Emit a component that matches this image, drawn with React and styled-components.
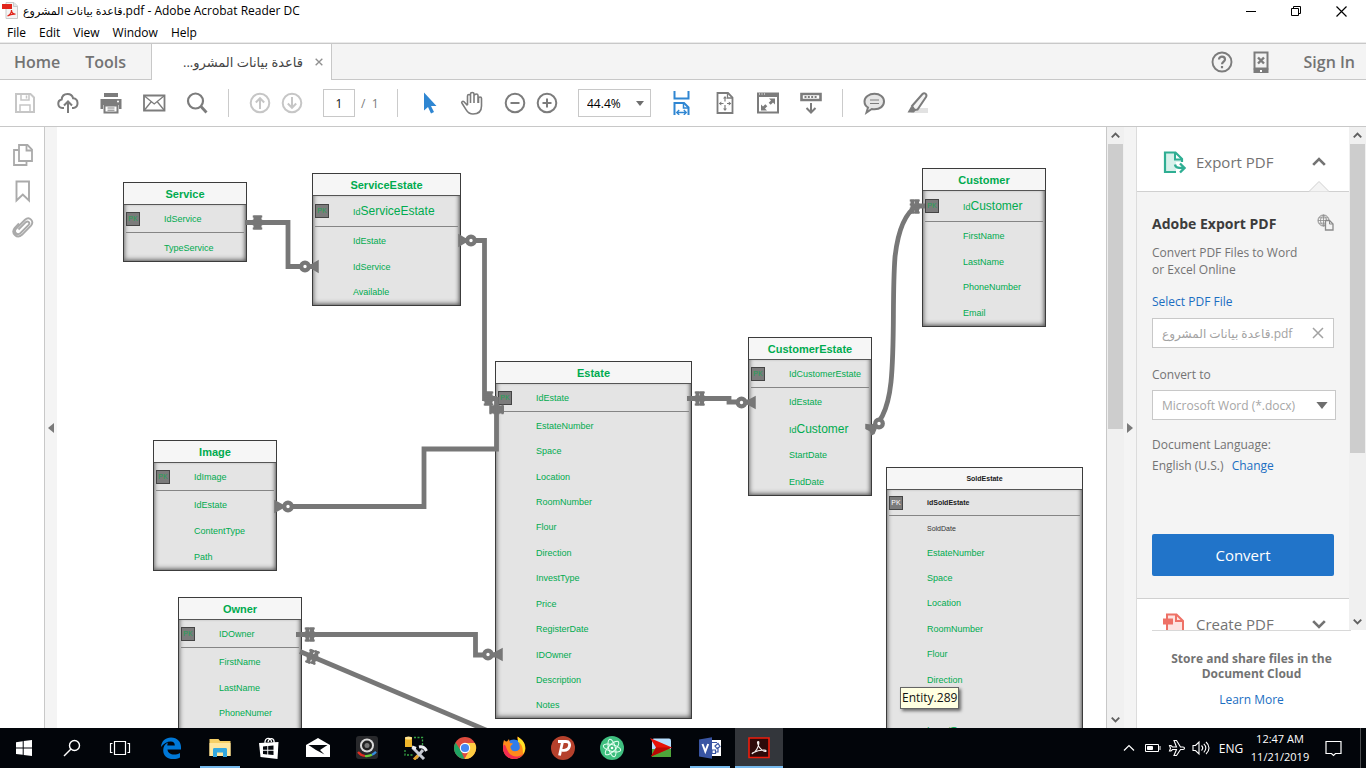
import React from "react";
import styled, { createGlobalStyle, css } from "styled-components";

const UI = `"Open Sans", "Noto Sans", "DejaVu Sans", sans-serif`;

const GlobalStyle = createGlobalStyle`
  *, *::before, *::after { box-sizing: border-box; }
  html, body { margin: 0; padding: 0; }
  body { font-family: ${UI}; font-size: 12px; color: #000; background: #fff; overflow: hidden; }
  button, input, select { font: inherit; color: inherit; margin: 0; }
  button { border: 0; padding: 0; background: none; }
  a { color: #1b6ec2; text-decoration: none; }
  h1, h2, h3, p, ul { margin: 0; padding: 0; font-weight: inherit; }
  ul { list-style: none; }
  svg { display: block; flex: none; }
`;

const Screen = styled.div`
  display: flex;
  flex-direction: column;
  height: 100vh;
`;

/* ---------- window chrome ---------- */

const TitleBar = styled.header`
  display: flex;
  align-items: center;
  height: 22px;
  padding: 0 2px 0 1px;
`;

const WindowTitle = styled.h1`
  flex: 1;
  margin-left: 4px;
  font-size: 12px;
  line-height: 22px;
`;

const FileName = styled.span`
  font-size: 11px;
`;

const WindowButton = styled.button`
  display: flex;
  align-items: center;
  justify-content: center;
  width: 45px;
  height: 22px;
`;

const MenuBar = styled.nav`
  display: flex;
  gap: 13px;
  height: 20px;
  padding: 0 7px;
  line-height: 22px;
`;

const TabBar = styled.div`
  display: flex;
  height: 38px;
  background: #f4f4f4;
  border-top: 1px solid #eaeaea;
  box-shadow: inset 0 1px #c8c8c8, inset 0 -1px #c8c8c8;
`;

const MainTabs = styled.div`
  display: flex;
  align-items: center;
  gap: 25px;
  width: 151px;
  padding-left: 14px;
`;

const BarText = styled.button`
  font-size: 16px;
  font-weight: 600;
  line-height: 20px;
  color: #737373;
`;

const DocumentTab = styled.div`
  display: flex;
  align-items: center;
  justify-content: flex-end;
  gap: 12px;
  width: 181px;
  padding-right: 8px;
  margin-top: 1px;
  background: #fff;
  border: solid #c8c8c8;
  border-width: 0 1px;
  font-size: 13px;
  color: #444;
`;

const TabActions = styled.div`
  display: flex;
  align-items: center;
  margin-left: auto;
  gap: 15px;
  padding-right: 11px;

  ${BarText} { margin-left: 16px; }
`;

/* ---------- toolbar ---------- */

const ToolBar = styled.div`
  display: flex;
  align-items: center;
  gap: 19px;
  height: 47px;
  padding-left: 13px;
  border-bottom: 1px solid #c8c8c8;
`;

const Pair = styled.div`
  display: flex;
  gap: 8px;
`;

const ToolButton = styled.button`
  width: 24px;
  height: 24px;
  color: ${(p) => (p.$tone === "blue" ? "#2f86d2" : p.$tone === "off" ? "#c6c6c6" : "#7c7c7c")};
`;

const Divider = styled.span`
  width: 1px;
  height: 28px;
  background: #cbcbcb;
`;

const PageField = styled.label`
  display: flex;
  align-items: center;
  width: 55px;
  gap: 6px;
  color: #7c7c7c;
  white-space: nowrap;

  input {
    width: 32px;
    height: 28px;
    padding: 0;
    border: 1px solid #c8c8c8;
    text-align: center;
    color: #111;
  }
`;

const SelectBox = styled.div`
  display: flex;
  align-items: center;
  width: ${(p) => p.$width}px;
  height: ${(p) => p.$height}px;
  background: #fff;
  border: 1px solid #c8c8c8;

  select {
    flex: 1;
    min-width: 0;
    height: 100%;
    border: 0;
    padding: 0 0 0 ${(p) => p.$pad}px;
    background: transparent;
    appearance: none;
  }
  svg { margin-right: ${(p) => p.$pad - 2}px; color: #6e6e6e; }
`;

/* ---------- work area ---------- */

const Work = styled.main`
  display: flex;
  flex: 1;
  min-height: 0;
`;

const Rail = styled.nav`
  display: flex;
  flex-direction: column;
  align-items: center;
  gap: 12px;
  width: 45px;
  padding: 16px 0 0 2px;
  border-right: 1px solid #c8c8c8;
`;

const RailButton = styled.button`
  width: 24px;
  height: 24px;
  color: #aaa;
`;

const CloseButton = styled.button`
  color: #909090;
`;

const Strip = styled.button`
  display: flex;
  align-items: center;
  justify-content: center;
  width: 12px;
  background: #f4f4f4;
  color: #7a7a7a;
`;

const Canvas = styled.div`
  position: relative;
  flex: 1;
  min-width: 0;
  overflow: hidden;
  border-right: 1px solid #c8c8c8;
`;

const ScrollTrack = styled.div`
  display: flex;
  flex-direction: column;
  width: ${(p) => p.$width}px;
  padding: 0 1px;
  background: #f0f0f0;
`;

const ScrollArrow = styled.button`
  display: flex;
  align-items: center;
  justify-content: center;
  height: 17px;
  color: #606060;
`;

const ScrollThumb = styled.div`
  flex: ${(p) => p.$share};
  background: #cdcdcd;
`;

const ScrollRest = styled.div`
  flex: ${(p) => p.$share};
`;

/* ---------- diagram ---------- */

const EntityBox = styled.section`
  position: absolute;
  left: ${(p) => p.$x}px;
  top: ${(p) => p.$y}px;
  width: ${(p) => p.$w}px;
  height: ${(p) => p.$h}px;
  display: flex;
  flex-direction: column;
  border: 1px solid #3c3c3c;
  background: #e4e4e4;
  font-family: "Liberation Sans", Arial, sans-serif;
  font-size: 9px;
  color: ${(p) => (p.$plain ? "#1a1a1a" : "#00ab4f")};
`;

const EntityTitle = styled.h2`
  height: 22px;
  line-height: 22px;
  background: #f6f6f6;
  border-bottom: 1px solid #555;
  text-align: center;
  font-size: ${(p) => (p.$plain ? 7 : 11)}px;
  font-weight: 700;
`;

const EntityBody = styled.div`
  display: flex;
  flex-direction: column;
  flex: 1;
  min-height: 0;
  box-shadow: inset 4px 0 4px -3px #777, inset -4px 0 4px -3px #555, inset 0 -5px 5px -4px #555;
`;

const KeyRow = styled.div`
  display: flex;
  align-items: center;
  height: ${(p) => p.$h}px;
  margin: 0 2px;
  border-bottom: 1px solid #858585;
  font-weight: ${(p) => (p.$plain ? 700 : 400)};
  font-size: ${(p) => (p.$plain ? 7 : 9)}px;
`;

const KeyBadge = styled.span`
  width: 14px;
  height: 14px;
  margin-right: 24px;
  border: 1px solid #444;
  background: #7b7b7b;
  font-size: 7px;
  line-height: 12px;
  font-weight: 400;
  text-align: center;
  color: ${(p) => (p.$plain ? "#fff" : "#22a355")};
`;

const Big = styled.span`
  font-size: 12px;
`;

const Fields = styled.ul`
  display: flex;
  flex-direction: column;
  flex: 1;
  padding: 1px 0 0 40px;
`;

const Field = styled.li`
  display: flex;
  align-items: center;
  ${(p) =>
    p.$plain
      ? css`height: 23px; font-size: 7px; color: #333;`
      : css`flex: 1; color: #00ab4f;`}
`;

const Links = styled.svg`
  position: absolute;
  left: 0;
  top: 0;
`;

const Tip = styled.div`
  position: absolute;
  left: 843px;
  top: 560px;
  padding: 0 1px;
  border: 1px solid #646464;
  background: #ffffe1;
  box-shadow: 2px 2px 3px #0008;
  color: #111;
  line-height: 20px;
`;

/* ---------- right panel ---------- */

const Panel = styled.aside`
  display: flex;
  flex-direction: column;
  width: 230px;
  border-left: 1px solid #dcdcdc;
  color: #737373;
`;

const PanelScroll = styled.div`
  display: flex;
  flex: 1;
  min-height: 0;
`;

const PanelContent = styled.div`
  flex: 1;
  overflow: hidden;
`;

const ToolHeader = styled.button`
  display: flex;
  align-items: center;
  width: 100%;
  height: ${(p) => p.$height}px;
  padding: ${(p) => p.$top || 0}px 23px 0 25px;
  gap: 10px;
  font-size: 15px;
  text-align: left;

  span { flex: 1; }
`;

const ToolBody = styled.div`
  position: relative;
  display: flex;
  flex-direction: column;
  align-items: flex-start;
  padding: 22px 15px;
  background: #f4f4f4;
  border: solid #d0d0d0;
  border-width: 1px 0;
  font-size: 12px;
`;

const Notch = styled.svg`
  position: absolute;
  right: 20px;
  top: -11px;
`;

const ToolTitle = styled.h2`
  display: flex;
  justify-content: space-between;
  width: 182px;
  line-height: 20px;
  font-size: 14px;
  font-weight: 700;
  color: #3c3c3c;
`;

const Description = styled.p`
  margin-top: 10px;
  line-height: 17px;
`;

const PickLink = styled.a`
  margin-top: 15px;
  line-height: 18px;
`;

const FileField = styled.div`
  display: flex;
  align-items: center;
  width: 182px;
  height: 30px;
  margin-top: 7px;
  padding: 0 9px;
  border: 1px solid #c8c8c8;
  background: #fff;
  color: #a2a2a2;

  input {
    flex: 1;
    min-width: 0;
    padding: 0;
    border: 0;
  }
`;

const FieldLabel = styled.label`
  margin: 18px 0 6px;
  line-height: 18px;
`;

const FormatSelect = styled(SelectBox)`
  color: #a6a6a6;
`;

const Language = styled.p`
  margin-top: 14px;
  line-height: 21px;

  a { margin-left: 5px; }
`;

const ConvertButton = styled.button`
  width: 182px;
  height: 42px;
  margin-top: 58px;
  border-radius: 2px;
  background: #2174c9;
  color: #fff;
  font-size: 15px;
`;

const PanelFooter = styled.footer`
  height: 98px;
  margin-left: 15px;
  margin-right: 15px;
  padding: 20px 0 0;
  border-top: 1px solid #d8d8d8;
  text-align: center;
  line-height: 15px;

  p { font-weight: 700; margin-bottom: 11px; }
`;

/* ---------- taskbar ---------- */

const TaskBar = styled.footer`
  display: flex;
  height: 40px;
  background: #02050a;
  color: #fff;
`;

const TaskGroup = styled.div`
  display: flex;
  gap: ${(p) => (p.$apps ? 1 : 0)}px;
  margin-left: ${(p) => (p.$apps ? 3 : 0)}px;
`;

const TaskButton = styled.button`
  position: relative;
  display: flex;
  align-items: center;
  justify-content: center;
  width: ${(p) => p.$width || 48}px;
  height: 40px;
  background: ${(p) => (p.$state === "active" ? "#33363b" : "none")};
  box-shadow: ${(p) => (p.$state === "active" ? "inset 0 -2px #76b9ed" : "none")};

  &::after {
    content: "";
    display: ${(p) => (p.$state === "open" ? "block" : "none")};
    position: absolute;
    left: 4px;
    right: 4px;
    bottom: 0;
    height: 2px;
    background: #76b9ed;
  }
`;

const Tray = styled.div`
  display: flex;
  align-items: center;
  margin-left: auto;
  padding-right: 5px;
`;

const Clock = styled.time`
  width: 62px;
  text-align: center;
  line-height: 18px;
  font-size: 11px;
`;

const PeekEdge = styled.span`
  width: 1px;
  height: 40px;
  margin-left: 4px;
  background: #4b4d50;
`;

/* ---------- icons ---------- */

const Glyph = ({ size = 24, w = 2, children, ...rest }) => (
  <svg width={size} height={size} viewBox="0 0 24 24" fill="none" stroke="currentColor" strokeWidth={w} aria-hidden="true" {...rest}>
    {children}
  </svg>
);

const Save = () => (
  <Glyph w="2"><path d="M3 3h14.500L21 6.500V21H3z" /><path d="M8 3v6h8V3M13.500 4.500v3M7 21v-7h10v7" strokeWidth="1.500" /></Glyph>
);
const Cloud = () => (
  <Glyph><path d="M8 17H6.300a4.300 4.300 0 0 1-.6-8.500C6 5 8.500 3 11.500 3c3 0 5 1.800 5.600 4.300A4.900 4.900 0 0 1 17.500 17H16" /><path d="M12 22V11M8 14.500l4-4 4 4" /></Glyph>
);
const Print = () => (
  <Glyph><path d="M5 2h14v4H5zM1.500 8h21v10H20v-4H4v4H1.500z" fill="currentColor" stroke="none" /><path d="M5.500 14.500h13v7h-13z" /><path d="M8.500 17h7M8.500 19.200h7" strokeWidth="1" /><circle cx="19" cy="10.500" r="1" fill="#fff" stroke="none" /></Glyph>
);
const Mail = () => (
  <Glyph w="1.800"><path d="M2 4.500h20.500v15H2z" /><path d="M2.500 5l9.700 8L22 5M2.500 19l6.500-8M22 19l-6.500-8" strokeWidth="1.300" /></Glyph>
);
const Search = () => (
  <Glyph w="2.200"><circle cx="10.500" cy="10" r="7.500" /><path d="M16 15.500l5.500 6" strokeWidth="2.800" /></Glyph>
);
const Up = () => (
  <Glyph><circle cx="12" cy="12" r="9.300" /><path d="M12 18V7.500M7.800 11.500L12 7.200l4.200 4.300" /></Glyph>
);
const Down = () => (
  <Glyph><circle cx="12" cy="12" r="9.300" /><path d="M12 6v10.500M7.800 12.500l4.200 4.300 4.200-4.300" /></Glyph>
);
const Pointer = () => (
  <Glyph><path d="M7 1.500v18l4-3.500 3 6.500 3-1.500-3-6h5.500z" fill="currentColor" stroke="none" /></Glyph>
);
const Hand = () => (
  <Glyph w="1.600"><path d="M7.500 14.500L4 10.800c-1.200-1.200-3 0-2 1.500l4.200 6.500C7.800 21.500 9.800 23 13 23c5.500 0 8.500-3 8.500-8V7.500c0-2-3-2-3 0V12M7.500 14V5c0-2 3-2 3 0v7M10.500 6V3c0-2 3.500-2 3.500 0v9M14.500 4.500c0-2 3.500-2 3.500 0V12" /></Glyph>
);
const Minus = () => (
  <Glyph><circle cx="12" cy="12" r="9.300" /><path d="M7.500 12h9" /></Glyph>
);
const Plus = () => (
  <Glyph><circle cx="12" cy="12" r="9.300" /><path d="M7.500 12h9M12 7.500v9" /></Glyph>
);
const FitWidth = () => (
  <Glyph><path d="M4.500 0v7.500h14V0M4.500 24V12H14l4.500 4.500V24" /><path d="M13.500 12v5h5" strokeWidth="1.500" /><path d="M7 21.500h9M9.200 19l-2.500 2.500L9.200 24M13.800 19l2.500 2.500-2.500 2.500" strokeWidth="1.300" /></Glyph>
);
const FitPage = () => (
  <Glyph w="1.800"><path d="M4.500 2H15l4.500 4.500V22h-15z" /><path d="M14.500 2.500V7h5" strokeWidth="1.300" /><path d="M12 6.500v4M12 14v4.500M6.500 12.500h4M14 12.500h4" strokeWidth="1.200" /><path d="M12 5l2 2.500h-4zM12 20l2-2.500h-4zM5.800 12.500l2.500-2v4zM18.300 12.500l-2.500-2v4z" fill="currentColor" stroke="none" /></Glyph>
);
const FullScreen = () => (
  <Glyph><path d="M2 4h20v17.500H2z" /><path d="M1 1.500h22V6H1z" fill="currentColor" stroke="none" /><path d="M3 3h1M5.500 3h1M8 3h1" stroke="#fff" strokeWidth="1" /><path d="M13 7.500h6v6l-2-2-2.300 2.300-2-2L15 9.500zM5 19.500v-6l2 2 2.300-2.300 2 2L9 17.500l2 2z" fill="currentColor" stroke="none" /></Glyph>
);
const ReadMode = () => (
  <Glyph><path d="M2.500 3h19v6h-19z" strokeWidth="2.600" /><path d="M5.500 6h2M8.800 6h2M12.200 6h2M15.600 6h2" strokeWidth="1.800" /><path d="M12 12v9M7.500 17l4.500 4.500 4.500-4.500" /></Glyph>
);
const Comment = () => (
  <Glyph><path d="M12.500 2.800c5.500 0 9.500 3.200 9.500 7.700 0 4.600-4 7.800-9.500 7.800-1 0-2 0-2.800-.3L4.500 21.500l1.500-5C3.500 15 2.500 13 2.500 10.500c0-4.500 4.500-7.700 10-7.700z" fill="#e6e6e6" /><path d="M8 9h9M8 12.500h9" strokeWidth="1.200" /></Glyph>
);
const Marker = () => (
  <Glyph><path d="M9 17h14v5H6z" fill="#e2e2e2" stroke="none" /><path d="M7 15L17.500 3c2-1.800 5 .3 3.500 3L12.500 18.500 9.500 19z" fill="#f3f3f3" /><path d="M6 15.500l5 3.500-2 2.500H2.500z" fill="currentColor" stroke="none" /></Glyph>
);
const Help = () => (
  <Glyph w="1.900"><circle cx="12" cy="12" r="9.500" /><path d="M9 9.500C9 5.500 15 6 15 9.500c0 2-3 2.200-3 4.700M12 16v2.200" strokeWidth="2.200" /></Glyph>
);
const Phone = () => (
  <Glyph><path d="M5.500 2.500h13v16h-13z" strokeWidth="2" /><path d="M4.500 18.500h15v4.500h-15z" fill="currentColor" stroke="none" /><path d="M9 7.500l6 6M15 7.500l-6 6" strokeWidth="2.400" /><path d="M11 21h2" stroke="#fff" /></Glyph>
);
const Pages = () => (
  <Glyph w="1.800"><path d="M8 2h8.500L21 6.500V18H8z" /><path d="M15.500 2.500v5H21" /><path d="M7.500 7H3v15h12.500v-3.500" /></Glyph>
);
const Bookmark = () => (
  <Glyph w="1.900"><path d="M5.500 2.500h12.500v19L11.800 15.500l-6.300 6z" /></Glyph>
);
const Clip = () => (
  <Glyph w="1.900"><path d="M7.500 14.500l7.300-7.300c2-1.900 4.700.5 2.800 2.600l-8 8.200c-3.500 3-7.300-1-4.600-4.300L14 4.800c4.500-4 9.500 1.500 6 5.800l-9 9.200c-5 4.600-11.500-1.800-7.200-7L8 8.500" /></Glyph>
);
const Chevron = ({ down, size = 12, w = 2 }) => (
  <svg width={size} height={size} viewBox="0 0 12 12" fill="none" stroke="currentColor" strokeWidth={w} aria-hidden="true">
    <path d={down ? "M1 3.500l5 5 5-5" : "M1 8.500l5-5 5 5"} />
  </svg>
);
const Caret = ({ w = 8, h = 5 }) => (
  <svg width={w} height={h} viewBox="0 0 8 5" fill="currentColor" aria-hidden="true"><path d="M0 0h8L4 5z" /></svg>
);
const Arrowhead = ({ right }) => (
  <svg width="6" height="10" viewBox="0 0 6 10" fill="currentColor" aria-hidden="true"><path d={right ? "M0 0v10l6-5z" : "M6 0v10L0 5z"} /></svg>
);
const Cross = ({ size = 12, w = 1.5 }) => (
  <svg width={size} height={size} viewBox="0 0 12 12" fill="none" stroke="currentColor" strokeWidth={w} aria-hidden="true"><path d="M1 1l10 10M11 1L1 11" /></svg>
);

const PdfFile = () => (
  <svg width="18" height="18" viewBox="0 0 18 18" aria-hidden="true">
    <path d="M5 .5h8l3.500 3.500v12.500H5z" fill="#f4f4f4" stroke="#c9c9c9" />
    <path d="M12.500 .5v4h4" fill="#e4e4e4" stroke="#c9c9c9" />
    <path d="M1 2h10v5H1z" fill="#e1251b" />
    <path d="M6.500 14c2.500-1 4-3.500 4-6 0 2.500 1.500 4 4 4.200-3-.2-5.500.3-8 1.800z" fill="none" stroke="#e1251b" strokeWidth="1.200" />
  </svg>
);
const ExportIcon = () => (
  <Glyph color="#2fae93"><path d="M3.500 3h10v7H20v2h-6v9H3.500z" fill="#d8f1eb" stroke="none" /><path d="M20 12V9l-6.500-6.500H3V22h11" strokeWidth="2.200" /><path d="M13 2.500v7h7" /><path d="M13 14.500c.5 3 2 3.500 8 3.500M18 13.500l4.500 4.500-4.500 4.500" strokeWidth="2.400" /></Glyph>
);
const CreateIcon = () => (
  <Glyph color="#ee7166"><path d="M5 2.500h9.500L21 9v13.500H5z" fill="#fde3e0" strokeWidth="2" /><path d="M14 2.500V9h7" /><path d="M1 6.500h10v6H1z" fill="currentColor" stroke="none" /></Glyph>
);
const GlobeDoc = () => (
  <svg width="17" height="17" viewBox="0 0 17 17" fill="none" stroke="#8a8a8a" aria-hidden="true">
    <circle cx="6.500" cy="6.500" r="5.500" /><path d="M1 6.500h11M6.500 1v11M2 3.800h9M2 9.200h9M6.500 1c-4 3-4 8 0 11M6.500 1c4 3 4 8 0 11" strokeWidth=".8" />
    <path d="M8.500 6.500h4l3.500 3.500v6H8.500z" fill="#f4f4f4" strokeWidth="1.300" /><path d="M12.500 6.500V10H16" />
  </svg>
);

/* ---------- taskbar icons ---------- */

const Task = ({ children, ...rest }) => (
  <svg width="24" height="24" viewBox="0 0 24 24" fill="none" aria-hidden="true" {...rest}>{children}</svg>
);
const appIcons = {
  Start: <Task><path d="M4 6.300l6.700-1v6.300H4zM11.700 5.100L20 4v7.600h-8.300zM4 12.600h6.700v6.200L4 18zM11.700 12.600H20V20l-8.300-1.100z" fill="#fff" /></Task>,
  Search: <Task stroke="#fff" strokeWidth="1.400"><circle cx="14.500" cy="9.500" r="5" /><path d="M11 13l-7 7" /></Task>,
  "Task View": <Task stroke="#fff" strokeWidth="1.200"><path d="M6.500 5.500h11v13h-11zM4.500 7.500h-2v9h2M19.500 7.500h2v9h-2" /></Task>,
  Edge: <Task><path d="M2 11C2.500 5 6.500 1.500 12 1.500c6.500 0 10 4.500 10 9.500v2.500H8.500c.3 3.500 3.200 5 6.500 5 2.200 0 4.200-.6 6-1.600v4.500c-2 1-4 1.600-6.800 1.600-6 0-10-3.200-10-8.800C4.200 10.500 6 8 9 6.500c-.5 1-.7 1.800-.7 3h7.500c0-2.500-1.300-4-4-4C8 5.500 4.500 7.500 2 11z" fill="#0078d7" /></Task>,
  "File Explorer": <Task><path d="M1.500 3h9l1.500 2h10.500v15h-21z" fill="#f5cf66" /><path d="M1.500 7h21v13h-21z" fill="#ffe7a0" /><path d="M5 21v-7.500c0-1 .5-1.500 1.500-1.500h11c1 0 1.500.5 1.500 1.500V21h-4v-4.500H9V21z" fill="#33a8e0" /></Task>,
  Store: <Task><path d="M8 7c-.5-6 6-6 6.500-1M11 6c1-5 7-4.500 6 1" stroke="#fff" strokeWidth="1.300" /><path d="M2 7l19.500-1-1 17L3.500 21z" fill="#fff" /><path d="M6 10.500l4.300-.4v3.700H6zM11.200 10l5.300-.5v4.300h-5.300zM6 14.700h4.300v3.700L6 18zM11.200 14.700h5.300v4.300l-5.300-.5z" fill="#05080d" /></Task>,
  Mail: <Task><path d="M0 9l12-7 12 7v12H0z" fill="#fff" /><path d="M2.500 9h19L14 14l4.500 4.500L10 14z" fill="#05080d" /></Task>,
  Camera: <Task><rect x="1" y="0" width="22" height="23" rx="3" fill="#28292c" /><circle cx="12" cy="9.500" r="7" fill="#dadada" /><circle cx="12" cy="9.500" r="5" fill="#222" /><circle cx="12" cy="9.500" r="2.500" fill="#777" /><path d="M3 16c2 2.500 4 3.500 7 4" stroke="#e22d22" strokeWidth="2.200" /><path d="M10 20c3 .3 5-.2 7-1.200" stroke="#6ccb38" strokeWidth="2.200" /><path d="M17 18.800c2-.8 3-1.800 4-3" stroke="#368ddd" strokeWidth="2.200" /></Task>,
  "Data Tools": <Task><path d="M1 1.500h7V11H1z" fill="#f0b62b" /><ellipse cx="4.500" cy="2" rx="3.500" ry="1.500" fill="#ffe490" /><path d="M10 1.500h8.500V9M1 14v5h8" stroke="#36a344" strokeWidth="1.300" strokeDasharray="2 1.500" /><path d="M9 12l11 11M12 22l7-8" stroke="#c7cbd4" strokeWidth="3" /><path d="M8 11l4 1.500M15 11c4-1 6 1 7.500 4" stroke="#eef0f4" strokeWidth="3" /><path d="M10 23.500l4-4" stroke="#e1a22c" strokeWidth="3" /></Task>,
  Chrome: <Task><circle cx="12" cy="12" r="11" fill="#dd4b3e" /><path d="M2.500 6.500L8 15l3.500 8A11 11 0 0 1 2.500 6.500z" fill="#1fa463" /><path d="M12 7h9.900A11 11 0 0 1 11.500 23L16.500 14z" fill="#ffcd42" /><circle cx="12" cy="12" r="5.200" fill="#fff" /><circle cx="12" cy="12" r="4.100" fill="#4688f1" /></Task>,
  Firefox: <Task><circle cx="12" cy="13" r="9.500" fill="#2f7dea" /><path d="M2 4c1 1 2 1.500 3 1.500L7 3l1 4 3 .5c-1 2-3 2-2.500 4 1 5 7 4.500 9 1.500 1-3-1-6-1-6l3 1c-2-3-5-3.500-4-7.500 5 3 8 7 8 12C23 19 18 23 12 23S1 18 1 12c0-3 0-5 1-8z" fill="#ff8a1b" /><path d="M1.500 9c-2 7 3 14 10.500 14 4 0 7-2 9-5-5 4-11 3-14-1C4 13 4 8 1.500 9z" fill="#f22b50" /><path d="M16 1c5 3 7.500 7 7 12-.2 2-1 4-2 5 0-6-1-10-5-12z" fill="#ffe226" /></Task>,
  Psiphon: <Task><circle cx="12" cy="12" r="12" fill="#b5412c" /><path d="M7 5.500h8c3.500 0 4 2.500 3.300 5-.8 3-2.700 3.800-5.300 3.800h-2M11.500 6L8.500 19.500" stroke="#fff" strokeWidth="2.800" /></Task>,
  Atom: <Task><circle cx="12" cy="12" r="12" fill="#3fbf7f" /><g stroke="#e8fff3" strokeWidth="1"><ellipse cx="12" cy="12" rx="3.400" ry="9" transform="rotate(-15 12 12)" /><ellipse cx="12" cy="12" rx="3.400" ry="9" transform="rotate(45 12 12)" /><ellipse cx="12" cy="12" rx="3.400" ry="9" transform="rotate(105 12 12)" /></g><circle cx="12" cy="12" r="1.300" fill="#fff" /></Task>,
  Player: <Task><rect x="3" y="2.500" width="19" height="18.500" rx="2" fill="#b7dfff" /><path d="M3 13h19v8H3z" fill="#4fa63a" /><path d="M1 2l22 9.500L2 20.500l5-9z" fill="#e81309" /><path d="M7 11.500h16L2 20.500z" fill="#b80904" /></Task>,
  Visio: <Task><path d="M12 4h11v16H12z" fill="#fff" /><path d="M14 14h3.500v3.500H14zM17 10l3-2.500 2 3-3 2zM14 6.500h5M20 11v5h-2" stroke="#3955a3" strokeWidth="1.200" /><path d="M1 3.500l13-2.300v21.600L1 20.500z" fill="#3955a3" /><path d="M4.500 8l2.800 7.500L10.200 8" stroke="#fff" strokeWidth="2" /></Task>,
  Acrobat: <Task><path d="M2 2h20v19.500H2z" fill="#2d0a0a" stroke="#ee1c0c" strokeWidth="1.600" /><path d="M5.500 17.500c3-1 6.500-6.500 6.300-11 0-1.500-1.500-1-1.200.5.600 4 4 7.500 7.500 8.500 1.500 0 1-1.500-.6-1.500-4 0-8 .8-11.500 2.800-1 .7-1 1-.5.700z" stroke="#f5efef" strokeWidth="1.200" /></Task>,
};

/* ---------- data ---------- */

const entities = [
  { title: "Service", x: 66, y: 55, w: 124, h: 80, keyH: 28, id: "IdService", fields: ["TypeService"] },
  { title: "ServiceEstate", x: 255, y: 46, w: 149, h: 133, keyH: 31, id: "Id", big: "ServiceEstate", fields: ["IdEstate", "IdService", "Available"] },
  { title: "Estate", x: 438, y: 234, w: 197, h: 358, keyH: 28, id: "IdEstate", fields: ["EstateNumber", "Space", "Location", "RoomNumber", "Flour", "Direction", "InvestType", "Price", "RegisterDate", "IDOwner", "Description", "Notes"] },
  { title: "Image", x: 96, y: 313, w: 124, h: 131, keyH: 28, id: "IdImage", fields: ["IdEstate", "ContentType", "Path"] },
  { title: "Owner", x: 121, y: 470, w: 124, h: 156, keyH: 28, id: "IDOwner", fields: ["FirstName", "LastName", "PhoneNumer", ""] },
  { title: "Customer", x: 865, y: 41, w: 124, h: 159, keyH: 31, id: "Id", big: "Customer", fields: ["FirstName", "LastName", "PhoneNumber", "Email"] },
  { title: "CustomerEstate", x: 691, y: 210, w: 124, h: 159, keyH: 28, id: "IdCustomerEstate", fields: ["IdEstate", ["Id", "Customer"], "StartDate", "EndDate"] },
  { title: "SoldEstate", x: 829, y: 340, w: 197, h: 277, keyH: 26, plain: true, id: "idSoldEstate", lead: "SoldDate", fields: ["EstateNumber", "Space", "Location", "RoomNumber", "Flour", "Direction", "", "InvestType"] },
];

const Entity = ({ e }) => (
  <EntityBox $x={e.x} $y={e.y} $w={e.w} $h={e.h} $plain={e.plain}>
    <EntityTitle $plain={e.plain}>{e.title}</EntityTitle>
    <EntityBody>
      <KeyRow $h={e.keyH} $plain={e.plain}>
        <KeyBadge $plain={e.plain}>PK</KeyBadge>
        <span>{e.id}{e.big && <Big>{e.big}</Big>}</span>
      </KeyRow>
      <Fields>
        {e.lead && <Field $plain>{e.lead}</Field>}
        {e.fields.map((f, i) => (
          <Field key={i}>{Array.isArray(f) ? <span>{f[0]}<Big>{f[1]}</Big></span> : f}</Field>
        ))}
      </Fields>
    </EntityBody>
  </EntityBox>
);

const links = [
  "M188 95.500H231V139.500H257",
  "M405 113.500H427.500V271.500H440",
  "M439.500 270V322H367V379.500H226",
  "M239 507.500H418.500V528H442",
  "M243 524.500L436 606",
  "M630 271.500H672V275H695",
  "M810 300.500C822 302 831 283 834 255C838 215 835 170 838 130C841 103 848 86 860 79H868",
];
const rings = [[248, 139.500], [414, 113.500], [231, 379.500], [431, 527.500], [684.500, 275.500], [822, 296.500]];
const feet = [
  "M252 139.500l9-5.500v11z", "M411 113.500l-9-5.500v11z", "M228 379.500l-10-5.500v11z",
  "M435 527.500l10-5.500v11z", "M688 275.500l10-5.500v11z", "M820 299l-11-1.500v4l4 2 2 4 2-1z",
];
const bars = ["M198.500 88.500v14M202.500 88.500v14", "M429.500 264.500v14M433.500 264.500v14", "M432.500 280.500h14.500M432.500 284.500h14.500", "M250.500 500.500v14M255 500.500v14", "M250.500 536l5-13.500M255.500 537l5-13", "M640.500 264.500v14M645 264.500v14", "M855.500 72.500v14M860 72.500v14"];

const Connectors = () => (
  <Links width="1049" height="601" viewBox="0 0 1049 601" fill="none" stroke="#777" aria-hidden="true">
    {links.map((d) => <path key={d} d={d} strokeWidth="4.800" />)}
    {bars.map((d) => <path key={d} d={d} strokeWidth="4" />)}
    {bars.map((d) => <path key={d} d={d} strokeWidth="5.500" strokeDasharray="2 2" />)}
    {feet.map((d) => <path key={d} d={d} fill="#777" strokeWidth="1.500" />)}
    {rings.map(([x, y]) => <circle key={x} cx={x} cy={y} r="3.800" fill="#fff" strokeWidth="4.200" />)}
  </Links>
);

const tools = (list) => list.map(([name, Icon, tone]) => (
  <ToolButton key={name} aria-label={name} $tone={tone}><Icon /></ToolButton>
));

const apps = [
  ["Edge"], ["File Explorer", "open"], ["Store"], ["Mail"], ["Camera"], ["Data Tools"], ["Chrome"],
  ["Firefox"], ["Psiphon"], ["Atom"], ["Player"], ["Visio", "open"], ["Acrobat", "active"],
];

const VerticalScroll = ({ width, thumb, rest }) => (
  <ScrollTrack $width={width}>
    <ScrollArrow aria-label="Scroll up"><Chevron size={9} w={2.500} /></ScrollArrow>
    <ScrollThumb $share={thumb} />
    <ScrollRest $share={rest} />
    <ScrollArrow aria-label="Scroll down"><Chevron down size={9} w={2.500} /></ScrollArrow>
  </ScrollTrack>
);

export default function App() {
  return (
    <>
      <GlobalStyle />
      <Screen>
        <TitleBar>
          <PdfFile />
          <WindowTitle><FileName>قاعدة بيانات المشروع</FileName>.pdf - Adobe Acrobat Reader DC</WindowTitle>
          <WindowButton aria-label="Minimize"><svg width="11" height="11" stroke="#000"><path d="M0 5.500h10" /></svg></WindowButton>
          <WindowButton aria-label="Restore"><svg width="11" height="11" stroke="#000" fill="none"><path d="M.5 2.500h7v7h-7zM2.500 2.500v-2h7v7h-2" /></svg></WindowButton>
          <WindowButton aria-label="Close"><svg width="11" height="11" stroke="#000" strokeWidth="1.200"><path d="M.5 .5l10 10M10.500 .5l-10 10" /></svg></WindowButton>
        </TitleBar>
        <MenuBar>
          {["File", "Edit", "View", "Window", "Help"].map((m) => <button key={m}>{m}</button>)}
        </MenuBar>
        <TabBar>
          <MainTabs><BarText>Home</BarText><BarText>Tools</BarText></MainTabs>
          <DocumentTab>
            <span dir="rtl">قاعدة بيانات المشرو...</span>
            <CloseButton aria-label="Close tab"><Cross size={8} w={2} /></CloseButton>
          </DocumentTab>
          <TabActions>
            <ToolButton aria-label="Help"><Help /></ToolButton>
            <ToolButton aria-label="Mobile link"><Phone /></ToolButton>
            <BarText>Sign In</BarText>
          </TabActions>
        </TabBar>
        <ToolBar>
          {tools([["Save", Save, "off"], ["Upload", Cloud], ["Print", Print], ["Email", Mail], ["Find", Search]])}
          <Divider />
          <Pair>{tools([["Previous page", Up, "off"], ["Next page", Down, "off"]])}</Pair>
          <PageField><input aria-label="Page number" defaultValue="1" /><span>/&nbsp; 1</span></PageField>
          <Divider />
          {tools([["Select", Pointer, "blue"], ["Pan", Hand]])}
          <Pair>{tools([["Zoom out", Minus], ["Zoom in", Plus]])}</Pair>
          <SelectBox $width={73} $height={28} $pad={8}>
            <select aria-label="Zoom level" defaultValue="44.4%"><option>44.4%</option></select>
            <Caret />
          </SelectBox>
          {tools([["Fit width", FitWidth, "blue"], ["Fit page", FitPage], ["Full screen", FullScreen], ["Read mode", ReadMode]])}
          <Divider />
          {tools([["Comment", Comment], ["Highlight", Marker]])}
        </ToolBar>
        <Work>
          <Rail>
            {[["Pages", Pages], ["Bookmarks", Bookmark], ["Attachments", Clip]].map(([n, Icon]) => (
              <RailButton key={n} aria-label={n}><Icon /></RailButton>
            ))}
          </Rail>
          <Strip aria-label="Toggle navigation pane"><Arrowhead /></Strip>
          <Canvas>
            {entities.map((e) => <Entity key={e.title} e={e} />)}
            <Connectors />
            <Tip role="tooltip">Entity.289</Tip>
          </Canvas>
          <VerticalScroll width={17} thumb={285} rest={282} />
          <Strip aria-label="Toggle tools pane"><Arrowhead right /></Strip>
          <Panel>
            <PanelScroll>
              <PanelContent>
                <ToolHeader $height={64} $top={6}><ExportIcon /><span>Export PDF</span><Chevron size={14} w={2.300} /></ToolHeader>
                <ToolBody>
                  <Notch width="20" height="11" viewBox="0 0 20 11"><path d="M0 10.500L10 .5l10 10" fill="#f4f4f4" stroke="#d0d0d0" /></Notch>
                  <ToolTitle>Adobe Export PDF<GlobeDoc /></ToolTitle>
                  <Description>Convert PDF Files to Word<br />or Excel Online</Description>
                  <PickLink href="#select">Select PDF File</PickLink>
                  <FileField><input aria-label="PDF file" readOnly value="قاعدة بيانات المشروع.pdf" /><Cross size={12} /></FileField>
                  <FieldLabel htmlFor="format">Convert to</FieldLabel>
                  <FormatSelect $width={184} $height={30} $pad={9}>
                    <select id="format" defaultValue="docx"><option value="docx">Microsoft Word (*.docx)</option></select>
                    <Caret w={12} h={7} />
                  </FormatSelect>
                  <Language>Document Language:<br />English (U.S.) <a href="#change">Change</a></Language>
                  <ConvertButton>Convert</ConvertButton>
                </ToolBody>
                <ToolHeader $height={50}><CreateIcon /><span>Create PDF</span><Chevron down size={14} w={2.300} /></ToolHeader>
              </PanelContent>
              <VerticalScroll width={17} thumb={310} rest={160} />
            </PanelScroll>
            <PanelFooter>
              <p>Store and share files in the<br />Document Cloud</p>
              <a href="#learn">Learn More</a>
            </PanelFooter>
          </Panel>
        </Work>
        <TaskBar>
          <TaskGroup>
            {["Start", "Search", "Task View"].map((n) => <TaskButton key={n} aria-label={n}>{appIcons[n]}</TaskButton>)}
          </TaskGroup>
          <TaskGroup $apps>
            {apps.map(([n, state]) => <TaskButton key={n} aria-label={n} $state={state}>{appIcons[n]}</TaskButton>)}
          </TaskGroup>
          <Tray>
            <TaskButton $width={24} aria-label="Show hidden icons"><Chevron size={12} w={1.200} /></TaskButton>
            <TaskButton $width={24} aria-label="Battery"><svg width="16" height="10" fill="none" stroke="#fff"><path d="M.5 1.500h13v7H.5zM15 3v4" /><path d="M2.500 3.500h5v3h-5z" fill="#fff" /></svg></TaskButton>
            <TaskButton $width={24} aria-label="Airplane mode"><svg width="18" height="18" fill="none" stroke="#fff" strokeWidth="1.100"><path d="M1.500 6.500h1.500l1.500 1.500h4L6 1.500h2.500l4 6.500H15c2 0 2 2.500 0 2.500h-2.500l-4 6H6L8.500 10.500h-4L3 12H1.500l1-2.800z" /></svg></TaskButton>
            <TaskButton $width={24} aria-label="Volume"><svg width="18" height="16" fill="none" stroke="#fff" strokeWidth="1.100"><path d="M1 5.500h2.500L7 2v12L3.500 10.500H1zM9.500 5.500c1.500 1.500 1.500 3.500 0 5M11.800 3.800c2.700 2.500 2.700 6 0 8.500M14 2c4 3.500 4 8.500 0 12" /></svg></TaskButton>
            <TaskButton $width={36}>ENG</TaskButton>
            <Clock>12:47 AM<br />11/21/2019</Clock>
            <TaskButton $width={45} aria-label="Notifications"><svg width="17" height="17" fill="none" stroke="#fff" strokeWidth="1.200"><path d="M1 1.500h15v12H10.500L8.500 15.500 6.500 13.500H1z" /></svg></TaskButton>
            <PeekEdge />
          </Tray>
        </TaskBar>
      </Screen>
    </>
  );
}
